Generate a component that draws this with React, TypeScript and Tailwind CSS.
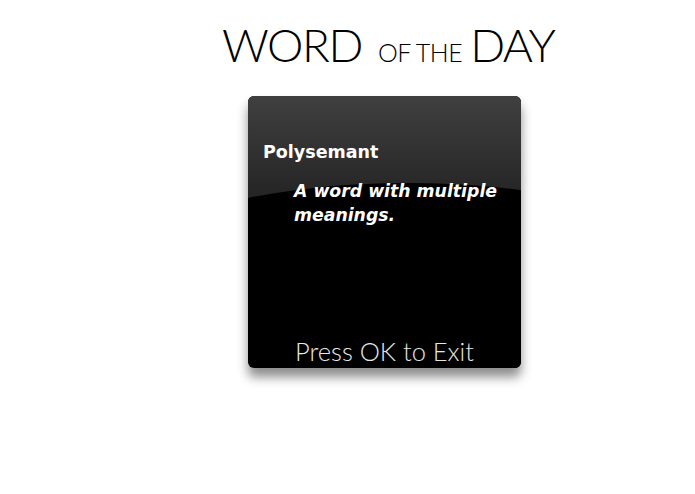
import React from 'react';

const WordCard: React.FC<{ word: string; meaning: string }> = ({ word, meaning }) => {
    return (
        <div className="relative ml-[26px] mt-[28px] flex h-[272px] w-[273px] flex-col overflow-hidden rounded-[6px] bg-black shadow-[0_9px_11px_rgba(0,0,0,0.45)]">
            {/* glossy top highlight, cut by a black arc */}
            <div className="absolute inset-x-0 top-0 h-[110px] bg-[linear-gradient(to_bottom,#404040_0%,#222_100%)]" />
            <div className="absolute left-[-140px] top-[87px] h-[194px] w-[600px] rounded-[50%] bg-black" />
            <div className="relative flex flex-1 flex-col">
                <div className="pl-[15px] pt-[44px] font-['DejaVu_Sans',sans-serif] text-[17.5px] font-bold leading-[24px] text-white">
                    {word}
                </div>
                <div className="mt-[15px] pl-[46px] pr-[14px] font-['DejaVu_Sans',sans-serif] text-[17.3px] font-bold italic leading-[24px] text-white">
                    {meaning}
                </div>
                <div className="mt-auto pb-[2px] text-center font-['Lato',sans-serif] text-[25.5px] font-light leading-[30px] text-[#e6e6e6]">
                    Press OK to Exit
                </div>
            </div>
        </div>
    );
};

export default function App() {
    return (
        <div className="h-[494px] w-[695px] bg-white">
            <div className="flex flex-col pl-[222px] pt-[22px]">
                <h1 className="flex items-baseline font-['Lato',sans-serif] font-light leading-none text-black">
                    <span className="text-[46px] tracking-[-1.5px]">WORD</span>
                    <span className="ml-[16px] text-[25px] tracking-[-0.5px]">OF THE</span>
                    <span className="ml-[8px] text-[46px] tracking-[-1.5px]">DAY</span>
                </h1>
                <WordCard word="Polysemant" meaning="A word with multiple meanings." />
            </div>
        </div>
    );
}
